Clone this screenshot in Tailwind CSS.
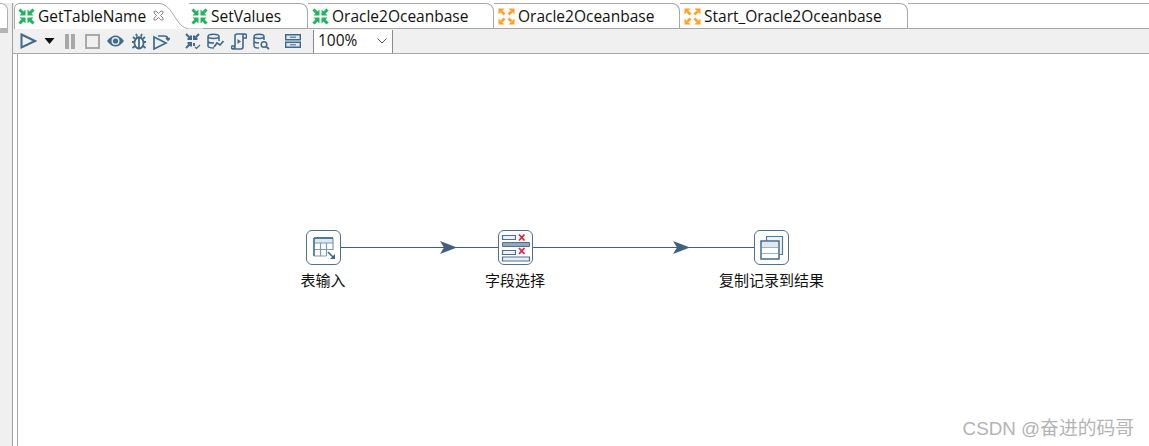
<!DOCTYPE html>
<html lang="en">

<head>
    <meta charset="UTF-8">
    <title>Transformation</title>
    <script src="https://cdn.jsdelivr.net/npm/@tailwindcss/browser@4"></script>
</head>

<body class="bg-white overflow-hidden">
    <main class="flex w-[1149px] h-[446px] font-['Open_Sans','Noto_Sans_CJK_SC',sans-serif] text-[#111]">
        <!-- left panel edge -->
        <div class="w-[13px] bg-[#f0f0f0] border-r border-[#a0a0a0] relative mt-[3px] shrink-0">
            <div class="w-[8px] h-[25px] bg-white rounded-tr-[7px] border-t border-r border-[#b0b0b0]"></div>
            <div class="w-[8px] h-[5px] bg-[#b4b4b4]"></div>
        </div>

        <div class="flex-1 flex flex-col min-w-0">
            <!-- tabs -->
            <div class="h-[29px] relative flex items-stretch text-[15.5px] bg-white pt-[3px]">
                <!-- active tab outline -->
                <svg class="absolute left-0 top-0" width="190" height="29" fill="none">
                    <path d="M0 29V0H1V9Q1 4 7 3.5H146C160 3.500 164 28 175.500 28.500H190V29H0Z" fill="#fff"/>
                    <path d="M0.500 29V3" stroke="#f0f0f0"/>
                    <path d="M1.500 29V9Q1.500 3.500 7 3.500H146C160 3.500 163 28.500 175.500 28.500" stroke="#a8a8a8"/>
                </svg>
                <div class="relative w-[176px] flex items-center">
                    <svg class="ml-[5px] shrink-0" width="17" height="17" viewBox="0 0 17 17"><use href="#fold-green"/></svg>
                    <span class="ml-[3px] mt-[1px]">GetTableName</span>
                    <svg class="ml-[7px] mt-[-2px]" width="11" height="11" viewBox="0 0 11 11" fill="none" stroke="#8a8a8a" stroke-width="1"><path d="M1 1.500L3 1 5.500 3.500 8 1 10 1.500 10 3 7.500 5.500 10 8 10 10 8 10 5.500 7.500 3 10 1 10 1 8 3.500 5.500 1 3Z"/></svg>
                </div>
                <div class="w-[119px] flex items-center border-t border-b border-r border-[#a8a8a8] rounded-tr-[8px]">
                    <svg class="ml-[2px] shrink-0" width="17" height="17" viewBox="0 0 17 17"><use href="#fold-green"/></svg>
                    <span class="ml-[3px] mt-[1px]">SetValues</span>
                </div>
                <div class="w-[186px] flex items-center border-t border-b border-r border-[#a8a8a8] rounded-tr-[8px]">
                    <svg class="ml-[4px] shrink-0" width="17" height="17" viewBox="0 0 17 17"><use href="#fold-green"/></svg>
                    <span class="ml-[3px] mt-[1px]">Oracle2Oceanbase</span>
                </div>
                <div class="w-[186px] flex items-center border-t border-b border-r border-[#a8a8a8] rounded-tr-[8px]">
                    <svg class="ml-[4px] shrink-0" width="17" height="17" viewBox="0 0 17 17"><use href="#expand-orange"/></svg>
                    <span class="ml-[3px] mt-[1px]">Oracle2Oceanbase</span>
                </div>
                <div class="w-[228px] flex items-center border-t border-b border-r border-[#a8a8a8] rounded-tr-[8px]">
                    <svg class="ml-[4px] shrink-0" width="17" height="17" viewBox="0 0 17 17"><use href="#expand-orange"/></svg>
                    <span class="ml-[3px] mt-[1px]">Start_Oracle2Oceanbase</span>
                </div>
                <div class="flex-1 border-t border-b border-[#a8a8a8]"></div>
            </div>

            <!-- toolbar -->
            <div class="h-[25px] bg-[#f0f0f0] border-b border-[#a8a8a8] flex items-center">
                <svg class="ml-[7px]" width="17" height="18" viewBox="0 0 17 18" fill="none" stroke="#3f6a8c" stroke-width="2"><path d="M1.500 2.500L15 9 1.500 15.500Z"/></svg>
                <svg class="ml-[7px]" width="11" height="6" viewBox="0 0 11 6" fill="#111"><path d="M0.500 0H10.500L5.500 6Z"/></svg>
                <svg class="ml-[10px]" width="10" height="15" viewBox="0 0 10 15" fill="#a8a8a8"><path d="M0 0h4v15H0zM6 0h4v15H6z"/></svg>
                <svg class="ml-[10px]" width="15" height="15" viewBox="0 0 15 15" fill="none" stroke="#a8a8a8" stroke-width="2"><path d="M1 1h13v13H1z"/></svg>
                <svg class="ml-[7px]" width="17" height="14" viewBox="0 0 17 14" fill="#3f6a8c"><path d="M0 7Q8.500 -4 17 7 8.500 18 0 7Z"/><circle cx="8.500" cy="7" r="4" fill="#e8eef3"/><circle cx="8.500" cy="7" r="2.600"/></svg>
                <svg class="ml-[7px]" width="16" height="17" viewBox="0 0 16 17" fill="none" stroke="#3f6a8c" stroke-width="1.800"><ellipse cx="8" cy="10" rx="4.500" ry="5.500" fill="#fff"/><path d="M5 4.500h6M8 5v10M4 9H1M15 9h-3M4 13l-2.500 2M12 13l2.500 2M4.500 6L2 4M11.500 6L14 4M6 3L5 1M10 3l1-2"/></svg>
                <svg class="ml-[6px]" width="17" height="17" viewBox="0 0 17 17" fill="none" stroke="#3f6a8c" stroke-width="1.700"><path d="M1 4L13 10 1 16Z"/><path d="M5 3H11Q15 3 15 6.500M13 5l2 2 2-2"/></svg>

                <svg class="ml-[15px]" width="16" height="17" viewBox="0 0 16 17" fill="none" stroke="#3f6a8c" stroke-width="2"><path d="M1 1L6 6M6 2.500V6H2.500M14 1L9 6M9 2.500V6h3.500M1 15L6 10M6 13.500V10H2.500M9 10V13"/><path d="M10 14l1.500 1.500L15 12" stroke-width="1.200"/></svg>
                <svg class="ml-[6px]" width="17" height="17" viewBox="0 0 17 17" fill="none" stroke="#3f6a8c" stroke-width="1.500"><path d="M1 3.500C1 0.500 12 0.500 12 3.500V8M1 3.500V13C1 14.500 4 15 7 15M1 3.500C1 6 12 6 12 3.500M1 8.500C2 10 5 10 7 10"/><path d="M7 14l3-4 3 2 3.500-4" stroke-width="1.700"/></svg>
                <svg class="ml-[7px]" width="16" height="17" viewBox="0 0 16 17" fill="none" stroke="#3f6a8c" stroke-width="1.600"><path d="M1 16H10Q12 16 12 13.500V2.500Q12 1 14 1H6Q4 1 4 3V13.500Q4 16 1 16ZM1 16Q0 15 1 13H4M12 5H15.500V2.500Q15.500 1 14 1"/><path d="M6.500 6L10 8.500 6.500 11Z" fill="#3f6a8c" stroke="none"/></svg>
                <svg class="ml-[6px]" width="17" height="17" viewBox="0 0 17 17" fill="none" stroke="#3f6a8c" stroke-width="1.500"><path d="M1 3.500C1 0.500 11 0.500 11 3.500V7M1 3.500V13C1 14.500 3 15 6 15M1 3.500C1 6 11 6 11 3.500M1 8.500C2 10 4 10 6 10"/><circle cx="11" cy="11.500" r="2.800"/><path d="M13 13.500L16 16" stroke-width="1.800"/></svg>

                <svg class="ml-[15px]" width="16" height="16" viewBox="0 0 16 16" fill="#dfe8ee" stroke="#3f6a8c" stroke-width="1.400"><path d="M0.700 1.700h14.600v5H0.700zM0.700 9.300h14.600v5H0.700z"/><path d="M5 4.200h6M5 11.800h6" stroke-width="1"/></svg>

                <div class="ml-[12px] w-[80px] h-[23px] bg-white border-l border-r border-[#8a8a8a] flex items-center justify-between text-[15.5px] pl-[4px] pr-[4px]">
                    <span>100%</span>
                    <svg class="mr-[1px]" width="10" height="6" viewBox="0 0 10 6" fill="none" stroke="#555"><path d="M0.500 0.500L5 5 9.500 0.500"/></svg>
                </div>
            </div>

            <!-- canvas -->
            <div class="flex-1 relative ml-[4px] border-l border-[#a8a8a8] bg-white">
                <!-- hops -->
                <svg class="absolute left-0 top-0" width="1131" height="392" fill="none">
                    <path d="M322 193.500H480M514 193.500H736" stroke="#3f617f" stroke-width="1.200"/>
                    <path d="M422 187L439 193.500 422 200 426 193.500Z" fill="#3f617f"/>
                    <path d="M655 187L672 193.500 655 200 659 193.500Z" fill="#3f617f"/>
                </svg>

                <!-- nodes -->
                <div class="absolute left-[288px] top-[176px] w-[35px] h-[35px] bg-white border-[1.500px] border-[#4f7190] rounded-[6px] flex items-center justify-center">
                    <svg width="29" height="29" viewBox="0 0 29 29" fill="none">
                        <path d="M5 5h19v5H5z" fill="#dbe9f3"/>
                        <path d="M24 5v12M5 23h12M5 10h19M5 16.500h19M11.500 10v13M17.500 10v13" stroke="#7f9ab0" stroke-width="1.200"/>
                        <path d="M5 5h19M5 5v18" stroke="#567a96" stroke-width="1.800"/>
                        <path d="M19 19l5 5" stroke="#3f6a8c" stroke-width="1.500"/>
                        <path d="M26 21v5h-5Z" fill="#3f6a8c"/>
                    </svg>
                </div>
                <div class="absolute left-[280px] top-[216px] w-[50px] text-center text-[15px] leading-[20px] whitespace-nowrap">表输入</div>

                <div class="absolute left-[480px] top-[176px] w-[35px] h-[35px] bg-white border-[1.500px] border-[#4f7190] rounded-[6px] flex items-center justify-center">
                    <svg width="31" height="31" viewBox="0 0 31 31" fill="none">
                        <path d="M2.500 3.500h13v4h-13zM2.500 18.500h13v4h-13z" fill="#eef3f7" stroke="#4f7190" stroke-width="1.200"/>
                        <path d="M2.500 10.500h27v4h-27z" fill="#8fa8bc" stroke="#4f7190" stroke-width="1"/>
                        <path d="M2.500 25h27v4h-27z" fill="#e8eff5" stroke="#4f7190" stroke-width="1.200"/>
                        <path d="M19 2.500l5.500 6M24.500 2.500l-5.500 6M19 16l5.500 6M24.500 16l-5.500 6" stroke="#e8203a" stroke-width="1.800"/>
                    </svg>
                </div>
                <div class="absolute left-[462px] top-[216px] w-[70px] text-center text-[15px] leading-[20px] whitespace-nowrap">字段选择</div>

                <div class="absolute left-[736px] top-[176px] w-[35px] h-[35px] bg-white border-[1.500px] border-[#4f7190] rounded-[6px] flex items-center justify-center">
                    <svg width="27" height="27" viewBox="0 0 27 27" fill="none">
                        <path d="M8.500 2.500h16v18h-16z" fill="#eef3f7" stroke="#567a96" stroke-width="1.200"/>
                        <path d="M3 7h18v18H3z" fill="#fff" stroke="#486b88" stroke-width="1.500"/>
                        <path d="M4 8h16v5H4z" fill="#dde9f1"/>
                        <path d="M4 13.500h16M4 19.500h16" stroke="#9db3c4"/>
                    </svg>
                </div>
                <div class="absolute left-[691px] top-[216px] w-[125px] text-center text-[15px] leading-[20px] whitespace-nowrap">复制记录到结果</div>

                <!-- watermark -->
                <div class="absolute right-[15px] bottom-[4px] text-[18.800px] leading-[26px] text-[#b4b4b4] font-['Liberation_Sans','Noto_Sans_CJK_SC',sans-serif] whitespace-nowrap">CSDN @奋进的码哥</div>
            </div>
        </div>
    </main>

    <!-- shared tab icons -->
    <svg class="hidden" width="0" height="0">
        <defs>
            <g id="fold-green" fill="#22b35e" stroke="none">
                <g id="fold-arm">
                    <path d="M1.500 1.500L5 5" stroke="#22b35e" stroke-width="3"/>
                    <path d="M7.500 7.500V1.500L1.500 7.500Z"/>
                </g>
                <use href="#fold-arm" transform="matrix(-1 0 0 1 17 0)"/>
                <use href="#fold-arm" transform="matrix(1 0 0 -1 0 17)"/>
                <use href="#fold-arm" transform="matrix(-1 0 0 -1 17 17)"/>
            </g>
            <g id="expand-orange" fill="#f7a428" stroke="none">
                <g id="expand-arm">
                    <path d="M3.500 3.500L6.500 6.500" stroke="#f7a428" stroke-width="2.600"/>
                    <path d="M0.500 0.500H6.500L0.500 6.500Z"/>
                </g>
                <use href="#expand-arm" transform="matrix(-1 0 0 1 17 0)"/>
                <use href="#expand-arm" transform="matrix(1 0 0 -1 0 17)"/>
                <use href="#expand-arm" transform="matrix(-1 0 0 -1 17 17)"/>
            </g>
        </defs>
    </svg>
</body>

</html>
